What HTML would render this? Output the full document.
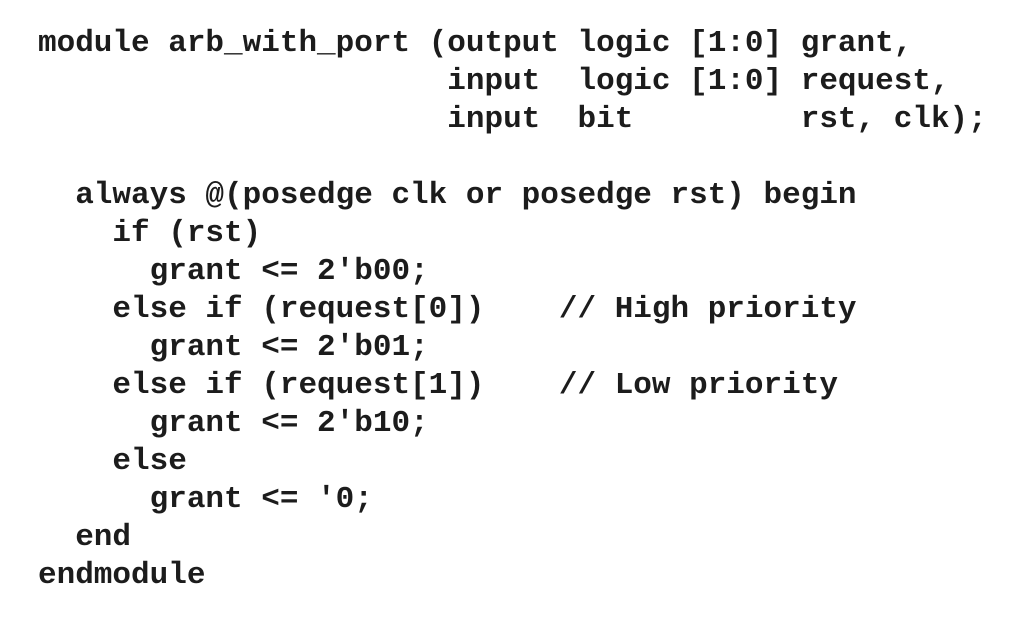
<!DOCTYPE html>
<html><head><meta charset="utf-8"><style>
html,body{margin:0;padding:0;background:#fff;width:1015px;height:641px;overflow:hidden}
pre{position:absolute;left:38px;top:25px;margin:0;font-family:"Courier New","Nimbus Mono PS","FreeMono","Liberation Mono",monospace;font-weight:bold;font-size:31px;line-height:38px;color:#1c1c1c}
</style></head><body>
<pre>module arb_with_port (output logic [1:0] grant,
                      input  logic [1:0] request,
                      input  bit         rst, clk);

  always @(posedge clk or posedge rst) begin
    if (rst)
      grant &lt;= 2'b00;
    else if (request[0])    // High priority
      grant &lt;= 2'b01;
    else if (request[1])    // Low priority
      grant &lt;= 2'b10;
    else
      grant &lt;= '0;
  end
endmodule</pre>
</body></html>
